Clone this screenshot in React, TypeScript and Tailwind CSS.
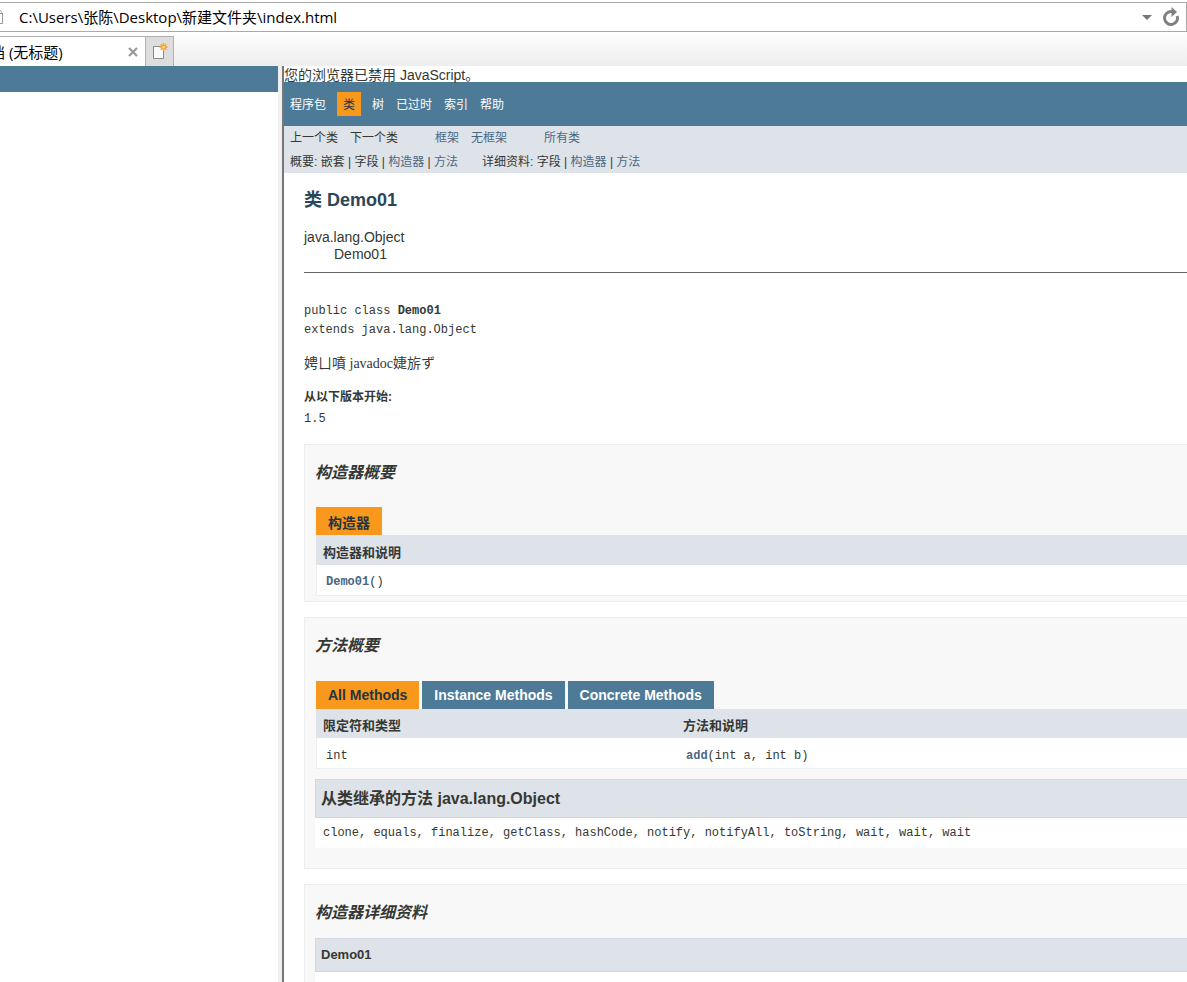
import React from "react";

interface TextLinkProps {
  children: React.ReactNode;
  className?: string;
}

interface TabItem {
  label: string;
  active: boolean;
}

const objectMethods = [
  "clone", "equals", "finalize", "getClass", "hashCode", "notify",
  "notifyAll", "toString", "wait", "wait", "wait",
];

const methodTabs: TabItem[] = [
  { label: "All Methods", active: true },
  { label: "Instance Methods", active: false },
  { label: "Concrete Methods", active: false },
];

function TextLink({ children, className = "" }: TextLinkProps) {
  return (
    <a href="#" className={`text-[#4A6782] ${className}`}>
      {children}
    </a>
  );
}

function NewTabIcon() {
  return (
    <svg width="16" height="18" viewBox="0 0 16 18" aria-hidden="true">
      <path d="M1.5 3.5h10v12h-10z" fill="#fafafa" stroke="#8a8a8a" />
      <path d="M11.5 0v8M7.5 4h8M8.7 1.2l5.6 5.6M14.3 1.2L8.7 6.8" stroke="#f5a31c" strokeWidth="1.4" />
      <circle cx="11.5" cy="4" r="1.5" fill="#ffd26b" />
    </svg>
  );
}

function AddressBar() {
  return (
    <div className="mt-[2px] flex h-[30px] items-center border-y border-r border-[#aaaaaa] bg-white">
      <svg width="4" height="14" viewBox="0 0 4 14" className="shrink-0" aria-hidden="true">
        <path d="M0 .5h.5l2 3v10H0M0 3.5h3" fill="none" stroke="#999999" />
      </svg>
      <input
        aria-label="地址"
        defaultValue="C:\Users\张陈\Desktop\新建文件夹\index.html"
        className="ml-[15px] min-w-0 flex-1 font-['Open_Sans','Noto_Sans_CJK_SC',sans-serif] text-[15px] text-black outline-none"
      />
      <button aria-label="显示地址列表" className="mr-[7px] flex h-6 w-4 items-center justify-center">
        <svg width="10" height="5" viewBox="0 0 10 5">
          <path d="M0 0h10L5 5z" fill="#777777" />
        </svg>
      </button>
      <button aria-label="刷新" className="mr-[6px]">
        <svg width="18" height="20" viewBox="0 0 18 20" fill="none">
          <path d="M10 4.5H9A6.500 6.500 0 1 0 15.200 9" stroke="#808080" strokeWidth="3" />
          <path d="M9.500 0l5.500 5-5.500 5z" fill="#808080" />
        </svg>
      </button>
    </div>
  );
}

function TabStrip() {
  return (
    <div className="flex h-[34px] items-end bg-linear-to-b from-white to-[#eeeeee]">
      <div className="flex h-[30px] w-[145px] items-center overflow-hidden border-t border-[#b0b0b0] bg-white">
        <span className="-ml-[10px] flex-1 whitespace-nowrap font-['Open_Sans','Noto_Sans_CJK_SC',sans-serif] text-[15px] leading-5 text-black">
          档 (无标题)
        </span>
        <button aria-label="关闭标签页" className="mr-[7px]">
          <svg width="10" height="10" viewBox="0 0 10 10">
            <path d="M1 1l8 8M9 1L1 9" stroke="#999999" strokeWidth="2.200" />
          </svg>
        </button>
      </div>
      <button aria-label="新建标签页" className="flex h-[30px] w-[29px] items-center justify-center border border-b-0 border-[#b0b0b0] bg-[#dddddd]">
        <NewTabIcon />
      </button>
    </div>
  );
}

function NavBars() {
  return (
    <nav className="text-[12px] leading-[14px]">
      <div className="flex h-11 items-center bg-[#4D7A97] px-[6px] text-white">
        <a href="#" className="pt-px">程序包</a>
        <span className="mx-[11px] bg-[#F8981D] px-[6px] pt-[6px] pb-1 text-[#253441]">类</span>
        <a href="#" className="pt-px">树</a>
        <a href="#" className="ml-3 pt-px">已过时</a>
        <a href="#" className="ml-3 pt-px">索引</a>
        <a href="#" className="ml-3 pt-px">帮助</a>
      </div>
      <div className="h-[47px] bg-[#dee3e9] px-[6px]">
        <div className="flex h-6 items-center">
          <span>上一个类</span>
          <span className="ml-3">下一个类</span>
          <TextLink className="ml-[37px]">框架</TextLink>
          <TextLink className="ml-3">无框架</TextLink>
          <TextLink className="ml-[37px]">所有类</TextLink>
        </div>
        <div className="flex h-6 items-center gap-6">
          <span>
            概要: 嵌套 | 字段 | <TextLink>构造器</TextLink> | <TextLink>方法</TextLink>
          </span>
          <span>
            详细资料: 字段 | <TextLink>构造器</TextLink> | <TextLink>方法</TextLink>
          </span>
        </div>
      </div>
    </nav>
  );
}

function Section({ title, children }: { title: string; children: React.ReactNode }) {
  return (
    <section className="mb-[15px] border border-r-0 border-[#ededed] bg-[#f8f8f8] pl-[10px]">
      <h3 className="pt-[18px] text-[16px] leading-5 font-bold italic">{title}</h3>
      {children}
    </section>
  );
}

function ConstructorSummary() {
  return (
    <Section title="构造器概要">
      <div className="mt-6 pb-[5px] pl-px">
        <table className="w-full border-separate border-spacing-0 border-b border-[#eeeeee] text-left">
          <caption className="text-left">
            <span className="inline-block h-7 bg-[#F8981D] px-3 pt-1 align-top text-[14px] leading-6 font-bold text-[#253441]">
              构造器
            </span>
          </caption>
          <thead className="bg-[#dee3e9] text-[13px]">
            <tr className="h-[30px]">
              <th className="pt-[5px] pl-[7px]">构造器和说明</th>
            </tr>
          </thead>
          <tbody className="bg-white font-['Liberation_Mono',monospace] text-[12px]">
            <tr className="h-[30px]">
              <td className="border-l border-[#eeeeee] pt-1 pl-[9px]">
                <TextLink className="font-bold">Demo01</TextLink>()
              </td>
            </tr>
          </tbody>
        </table>
      </div>
    </Section>
  );
}

function MethodSummary() {
  return (
    <Section title="方法概要">
      <div className="mt-[25px] ml-px flex gap-[3px]">
        {methodTabs.map(({ label, active }) => (
          <button
            key={label}
            className={`h-7 px-3 text-[14px] font-bold ${active ? "bg-[#F8981D] text-[#253441]" : "bg-[#4D7A97] text-white"}`}
          >
            {label}
          </button>
        ))}
      </div>
      <div className="pl-px">
        <table className="w-full table-fixed border-separate border-spacing-0 border-b border-[#eeeeee] text-left">
          <thead className="bg-[#dee3e9] text-[13px]">
            <tr className="h-[29px]">
              <th className="w-[360px] pt-[5px] pl-[7px]">限定符和类型</th>
              <th className="pt-[5px] pl-[7px]">方法和说明</th>
            </tr>
          </thead>
          <tbody className="bg-white font-['Liberation_Mono',monospace] text-[12px]">
            <tr className="h-[30px]">
              <td className="border-l border-[#eeeeee] pt-[6px] pl-[9px]">int</td>
              <td className="pt-[6px] pl-[10px]">
                <TextLink className="font-bold">add</TextLink>(int a, int b)
              </td>
            </tr>
          </tbody>
        </table>
      </div>
      <div className="mt-[10px] mb-5 bg-white">
        <h3 className="border border-r-0 border-[#d0d9e0] bg-[#dee3e9] pl-[5px] text-[16px] leading-[37px] font-bold">
          从类继承的方法 java.lang.Object
        </h3>
        <code className="block pl-2 font-['Liberation_Mono',monospace] text-[12px] leading-[30px]">
          {objectMethods.join(", ")}
        </code>
      </div>
    </Section>
  );
}

function ConstructorDetail() {
  return (
    <Section title="构造器详细资料">
      <div className="mt-[15px] bg-white pb-10">
        <h4 className="border border-r-0 border-[#d0d9e0] bg-[#dee3e9] pl-[5px] text-[13px] leading-8 font-bold">
          Demo01
        </h4>
      </div>
    </Section>
  );
}

export default function App() {
  return (
    <div className="flex h-screen flex-col overflow-hidden bg-white font-['Liberation_Sans','Noto_Sans_CJK_SC',sans-serif] text-[#353833]">
      <header className="shrink-0">
        <AddressBar />
        <TabStrip />
      </header>
      <div className="flex min-h-0 flex-1">
        <aside className="w-[278px] shrink-0">
          <div className="h-[26px] bg-[#4D7A97]" />
        </aside>
        <div className="w-[6px] shrink-0 border-r-2 border-[#777777] bg-[#f0f0f0]" />
        <main className="min-w-0 flex-1 overflow-hidden">
          <div className="h-4 text-[14px] leading-[18px]">您的浏览器已禁用 JavaScript。</div>
          <NavBars />
          <div className="pl-5">
            <h2 className="pt-[15px] text-[18px] leading-6 font-bold text-[#2c4557]">类 Demo01</h2>
            <div className="mt-[17px] text-[14px] leading-[17px]">
              <div>java.lang.Object</div>
              <div className="pl-[30px]">Demo01</div>
            </div>
            <hr className="mt-[9px] border-[#666666]" />
            <pre className="mt-[29px] font-['Liberation_Mono',monospace] text-[12px] leading-[19px]">
              public class <b>Demo01</b>{"\n"}extends java.lang.Object
            </pre>
            <p className="mt-[14px] font-['Liberation_Serif','Noto_Sans_CJK_SC',serif] text-[14px] leading-5">
              娉ㄩ噴 javadoc婕旂ず
            </p>
            <dl className="mt-[13px] mb-[14px]">
              <dt className="text-[12px] leading-5 font-bold">从以下版本开始:</dt>
              <dd className="pt-px font-['Liberation_Mono',monospace] text-[12px] leading-[22px]">1.5</dd>
            </dl>
            <ConstructorSummary />
            <MethodSummary />
            <ConstructorDetail />
          </div>
        </main>
      </div>
    </div>
  );
}
